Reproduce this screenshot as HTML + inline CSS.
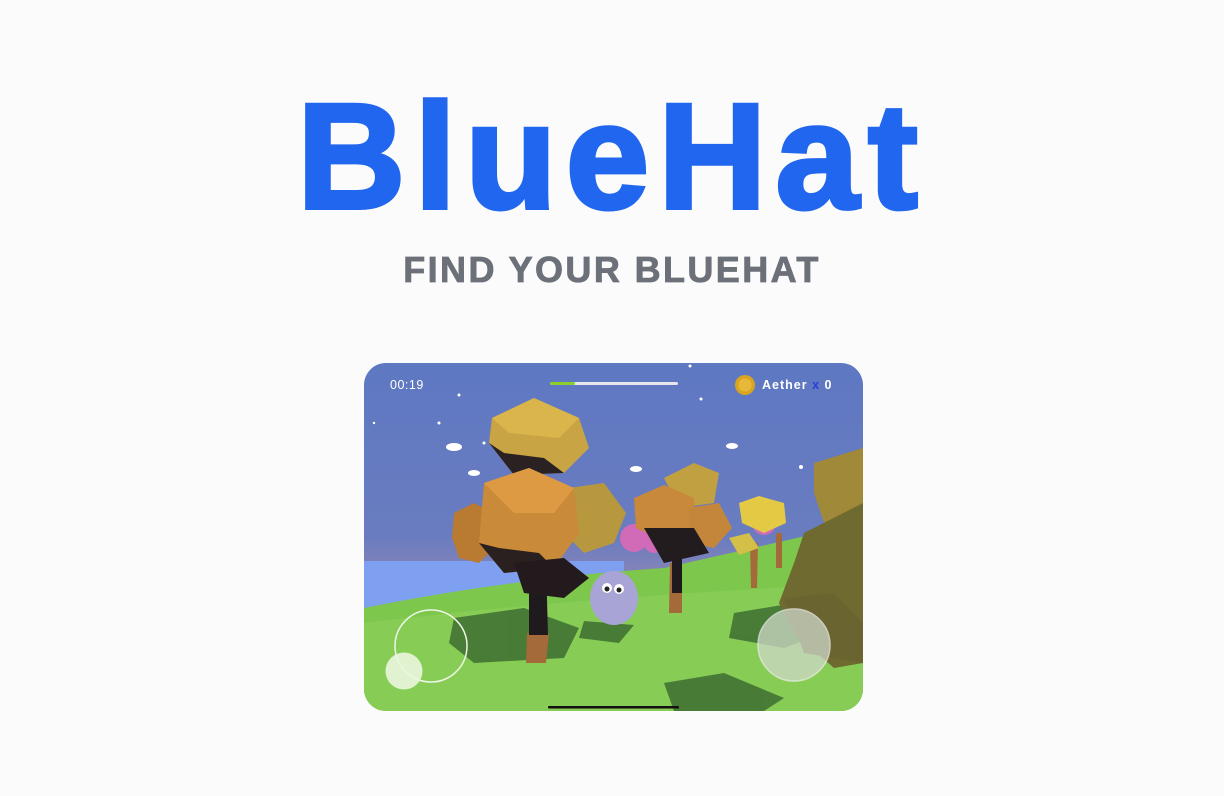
<!DOCTYPE html>
<html><head><meta charset="utf-8"><style>
html,body{margin:0;padding:0;background:#fbfbfb;width:1224px;height:796px;overflow:hidden}
.t{position:absolute;left:0;width:1224px;text-align:center;font-family:"Liberation Sans",sans-serif;font-weight:bold}
#h{top:66px;font-size:150px;color:#2166ee;letter-spacing:9px;line-height:180px;-webkit-text-stroke:4px #2166ee}
#s{top:248px;font-size:36px;color:#6c7079;letter-spacing:2.4px;line-height:44px;-webkit-text-stroke:0.8px #6c7079}
#g{position:absolute;left:364px;top:363px;width:499px;height:348px;border-radius:22px;overflow:hidden}
</style></head><body>
<div class="t" id="h">BlueHat</div>
<div class="t" id="s">FIND YOUR BLUEHAT</div>
<div id="g"><svg width="499" height="348" viewBox="0 0 499 348">
<defs><linearGradient id="sky" x1="0" y1="0" x2="0" y2="1">
<stop offset="0" stop-color="#5e78c2"/><stop offset="0.5" stop-color="#6a7cc0"/><stop offset="0.7" stop-color="#9a8bb0"/><stop offset="0.78" stop-color="#b49aa6"/></linearGradient></defs>
<rect width="499" height="348" fill="url(#sky)"/>
<rect x="0" y="198" width="260" height="50" fill="#7f9ff0"/>
<path d="M0 245 Q150 215 300 205 L499 160 L499 348 L0 348Z" fill="#7dc74d"/>
<path d="M0 260 Q200 235 499 220 L499 348 L0 348Z" fill="#86cc55"/>
<g fill="#2f5a2a" opacity="0.7">
<path d="M90 255 L160 245 L215 265 L200 295 L110 300 L85 280Z"/>
<path d="M300 320 L360 310 L420 335 L400 348 L310 348Z"/>
<path d="M370 250 L430 240 L460 270 L420 285 L365 275Z"/>
<path d="M220 258 L270 262 L255 280 L215 275Z"/>
</g>
<g fill="#a46a3a"><polygon points="163,270 185,270 182,300 162,300"/><polygon points="306,200 318,200 318,250 305,250"/><polygon points="386,180 394,180 393,225 387,225"/><polygon points="412,170 418,170 418,205 412,205"/><polygon points="311,180 316,180 316,250 311,250"/></g>
<polygon points="165,200 182,200 184,272 165,272" fill="#1e1a1e"/>
<polygon points="308,170 318,170 318,230 308,230" fill="#1e1a1e"/>
<g fill="#d16bb8"><circle cx="270" cy="175" r="14"/><circle cx="290" cy="180" r="10"/><circle cx="400" cy="160" r="12"/></g>
<polygon points="128,55 170,35 215,55 225,85 200,110 150,112 125,80" fill="#c9a444"/>
<polygon points="128,55 170,35 215,55 195,75 145,70" fill="#d9b54b"/>
<polygon points="125,80 150,112 200,110 180,95 140,90" fill="#2a2222"/>
<polygon points="90,150 110,140 130,150 135,180 115,200 95,195 88,175" fill="#b97a32"/>
<polygon points="205,125 240,120 262,150 250,180 220,190 200,170" fill="#b8983e"/>
<polygon points="120,120 165,105 210,125 215,170 190,205 140,210 115,180" fill="#c98a3a"/>
<polygon points="120,120 165,105 210,125 190,150 150,150" fill="#dd9a42"/>
<polygon points="115,180 140,210 190,205 175,190 135,185" fill="#2a2020"/>
<polygon points="150,200 200,195 225,215 200,235 160,230" fill="#221a1c"/>
<polygon points="300,115 330,100 355,110 350,140 315,145" fill="#c0a040"/>
<polygon points="270,135 300,122 330,135 332,165 300,178 272,165" fill="#c88a3a"/>
<polygon points="325,145 355,140 368,165 350,185 325,180" fill="#c4863a"/>
<polygon points="280,165 330,165 345,190 300,200" fill="#221c1e"/>
<polygon points="375,140 395,133 420,140 422,160 400,170 378,160" fill="#e3c944"/>
<polygon points="365,175 385,170 395,185 375,192" fill="#d4bf48"/>
<polygon points="450,100 499,85 499,165 460,160 450,130" fill="#a08a3a"/>
<polygon points="440,170 499,140 499,300 470,305 430,270 415,240 430,200" fill="#6e6a30"/>
<polygon points="420,235 470,230 499,260 499,300 440,290" fill="#6a6530"/>
<ellipse cx="250" cy="235" rx="24" ry="27" fill="#a9a4d6"/>
<circle cx="243" cy="225" r="5" fill="#fff"/><circle cx="255" cy="226" r="5" fill="#fff"/>
<circle cx="243" cy="226" r="2.5" fill="#222"/><circle cx="255" cy="227" r="2.5" fill="#222"/>
<g fill="#fff"><ellipse cx="90" cy="84" rx="8" ry="4"/><ellipse cx="110" cy="110" rx="6" ry="3"/><ellipse cx="272" cy="106" rx="6" ry="3"/><ellipse cx="368" cy="83" rx="6" ry="3"/>
<circle cx="95" cy="32" r="1.5"/><circle cx="75" cy="60" r="1.5"/><circle cx="437" cy="104" r="2"/><circle cx="326" cy="3" r="1.5"/><circle cx="120" cy="80" r="1.5"/><circle cx="10" cy="60" r="1.2"/><circle cx="337" cy="36" r="1.5"/></g>
<rect x="186" y="19" width="128" height="3" rx="1.5" fill="#e6e6ee"/>
<rect x="186" y="19" width="25" height="3" rx="1.5" fill="#8ccf2a"/>
<text x="26" y="26" fill="#fff" font-family="Liberation Sans,sans-serif" font-size="12.5" letter-spacing="0.5">00:19</text>
<circle cx="381" cy="22" r="10" fill="#d9a520"/><circle cx="381" cy="22" r="6.5" fill="#e8b83a"/>
<text x="398" y="26" fill="#fff" font-family="Liberation Sans,sans-serif" font-size="12.5" font-weight="bold" letter-spacing="1">Aether <tspan fill="#2b3fd6">x</tspan> 0</text>
<circle cx="67" cy="283" r="36" fill="none" stroke="#eef6e6" stroke-width="1.5"/>
<circle cx="40" cy="308" r="18.5" fill="#eaf6de" opacity="0.9"/>
<circle cx="430" cy="282" r="36" fill="#cfd8c8" opacity="0.75" stroke="#eee" stroke-width="1.5"/>
<rect x="184" y="343" width="131" height="2.5" rx="1" fill="#111"/>
</svg></div>
</body></html>
